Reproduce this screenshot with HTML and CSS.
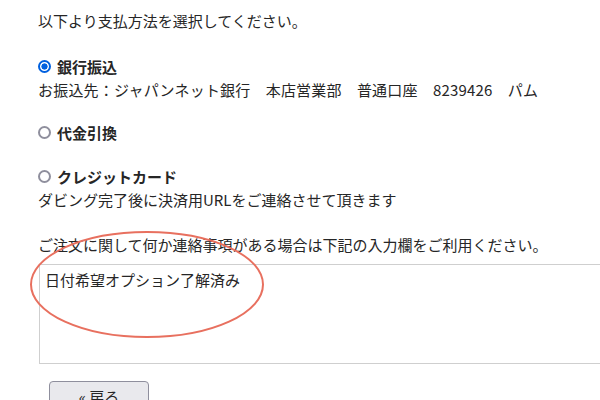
FILE: index.html
```html
<!doctype html>
<html lang="ja">
<head>
    <meta charset="UTF-8">
    <title>お支払方法</title>
    <link rel="stylesheet" href="styles.css">
</head>
<body>
<div class="pay-box">
    <p class="pay-lead">以下より支払方法を選択してください。</p>

    <div class="pay-option pay-first">
        <label class="pay-title"><input type="radio" name="pay" class="pay-radio" checked>銀行振込</label>
        <p class="pay-desc pay-account">お振込先：ジャパンネット銀行　本店営業部　普通口座　8239426　パム</p>
    </div>

    <div class="pay-option pay-second">
        <label class="pay-title"><input type="radio" name="pay" class="pay-radio">代金引換</label>
    </div>

    <div class="pay-option pay-third">
        <label class="pay-title"><input type="radio" name="pay" class="pay-radio">クレジットカード</label>
        <p class="pay-desc">ダビング完了後に決済用URLをご連絡させて頂きます</p>
    </div>

    <p class="pay-notice">ご注文に関して何か連絡事項がある場合は下記の入力欄をご利用ください。</p>
    <textarea class="pay-memo">日付希望オプション了解済み</textarea>

    <div class="pay-actions">
        <button class="pay-back">« 戻る</button>
    </div>

    <svg class="pay-mark" width="600" height="400" viewBox="0 0 600 400">
        <ellipse cx="147" cy="284.5" rx="116" ry="52.5" fill="none" stroke="#e8705f" stroke-width="2"/>
    </svg>
</div>
</body>
</html>
```

FILE: styles.css
```css
html, body {
    margin: 0;
    padding: 0;
    background: #fff;
    overflow: hidden;
}
.pay-box {
    position: relative;
    height: 400px;
    padding: 9px 0 0 38px;
    box-sizing: border-box;
    overflow: hidden;
    font-family: "Noto Sans CJK JP", "Noto Sans", sans-serif;
    font-size: 15px;
    line-height: 23px;
    color: #262626;
}
.pay-box p {
    margin: 0;
}
.pay-account {
    letter-spacing: 0.2px;
}
.pay-option {
    display: flex;
    flex-direction: column;
}
.pay-first {
    margin-top: 23px;
}
.pay-second {
    margin-top: 20px;
}
.pay-third {
    margin-top: 21px;
}
.pay-title {
    display: flex;
    align-items: center;
    font-weight: bold;
}
.pay-radio {
    appearance: none;
    -webkit-appearance: none;
    width: 13px;
    height: 13px;
    margin: 0 6px 0 0;
    border: 2px solid #8f8f9d;
    border-radius: 50%;
    box-sizing: border-box;
    background: #fff;
}
.pay-radio:checked {
    border-color: #0060df;
    background: radial-gradient(circle, #0060df 0, #0060df 2.8px, #fff 3.4px);
}
.pay-notice {
    margin-top: 22px !important;
}
.pay-memo {
    display: block;
    margin: 8px 0 0 1px;
    width: 600px;
    height: 100px;
    box-sizing: border-box;
    padding: 4px 5px;
    border: 1px solid #cfcfcf;
    font-family: inherit;
    font-size: 15px;
    line-height: 22px;
    color: #262626;
    resize: none;
    outline: none;
}
.pay-actions {
    margin: 17px 0 0 11px;
}
.pay-back {
    width: 100px;
    height: 30px;
    background: #e9e9ed;
    border: 1px solid #8f8f9d;
    border-radius: 4px;
    font-family: inherit;
    font-size: 15px;
    line-height: 20px;
    color: #262626;
    padding: 2px 0 0 0;
    vertical-align: top;
}
.pay-mark {
    position: absolute;
    left: 0;
    top: 0;
    pointer-events: none;
}
```
